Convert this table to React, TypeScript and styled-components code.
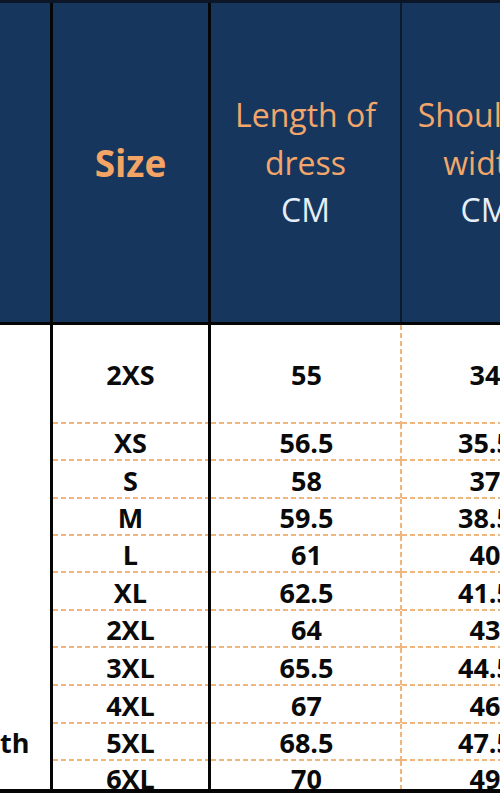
import React from 'react'
import styled, { createGlobalStyle } from 'styled-components'

const GlobalStyle = createGlobalStyle`
  *, *::before, *::after { box-sizing: border-box; }
  html, body {
    margin: 0;
    padding: 0;
    background: #fff;
    overflow: hidden;
  }
  body {
    font-family: 'Open Sans', 'Noto Sans', sans-serif;
  }
`

const COLS = '53px 158px 191px 166px'
const DASH = '#f1b57e'

const Sheet = styled.div`
  width: 568px;
  border-top: 3px solid #0b1729;
`

const HeaderRow = styled.div`
  display: grid;
  grid-template-columns: ${COLS};
  height: 322px;
  background: #17365d;
  border-bottom: 3px solid #050505;
`

const HeadCell = styled.div<{ edge?: 'solid' | 'thin' }>`
  display: flex;
  flex-direction: column;
  align-items: center;
  justify-content: center;
  text-align: center;
  white-space: nowrap;
  font-size: 32px;
  line-height: 47.5px;
  color: #f2a66b;
  border-right: ${p =>
    p.edge === 'solid' ? '3px solid #050608' : p.edge === 'thin' ? '2px solid #0c1a2e' : 'none'};
`

const SizeTitle = styled.span`
  font-size: 37px;
  font-weight: 700;
  color: #f4a565;
`

const Unit = styled.span`
  color: #e6eef8;
`

const Body = styled.div`
  border-bottom: 4px solid #050505;
`

const Row = styled.div<{ h: number }>`
  display: grid;
  grid-template-columns: ${COLS};
  grid-template-rows: ${p => p.h}px;
  height: ${p => p.h}px;
`

const dashedBottom = `
  repeating-linear-gradient(90deg, ${DASH} 0 5px, transparent 5px 8px) left bottom / 100% 2px no-repeat
`
const dashedRight = `
  repeating-linear-gradient(180deg, ${DASH} 0 5px, transparent 5px 8px) right top / 2px 100% no-repeat
`

const Cell = styled.div<{ kind: 'lead' | 'size' | 'mid' | 'end'; last?: boolean }>`
  display: flex;
  align-items: center;
  justify-content: ${p => (p.kind === 'lead' ? 'flex-start' : 'center')};
  min-height: 0;
  padding-top: ${p => (p.last ? 6 : 0)}px;
  font-size: 27px;
  font-weight: 700;
  line-height: 1;
  color: #0a0a0a;
  white-space: nowrap;
  border-right: ${p => (p.kind === 'lead' || p.kind === 'size' ? '3px solid #050505' : 'none')};
  background: ${p => {
    if (p.kind === 'lead') return 'none'
    const layers: string[] = []
    if (!p.last) layers.push(dashedBottom)
    if (p.kind === 'mid') layers.push(dashedRight)
    return layers.length ? layers.join(',') : 'none'
  }};
`

interface SizeRow {
  size: string
  length: string
  shoulder: string
  h: number
  lead?: string
}

const rows: SizeRow[] = [
  { size: '2XS', length: '55', shoulder: '34', h: 99 },
  { size: 'XS', length: '56.5', shoulder: '35.5', h: 37 },
  { size: 'S', length: '58', shoulder: '37', h: 38 },
  { size: 'M', length: '59.5', shoulder: '38.5', h: 37 },
  { size: 'L', length: '61', shoulder: '40', h: 37 },
  { size: 'XL', length: '62.5', shoulder: '41.5', h: 38 },
  { size: '2XL', length: '64', shoulder: '43', h: 37 },
  { size: '3XL', length: '65.5', shoulder: '44.5', h: 38 },
  { size: '4XL', length: '67', shoulder: '46', h: 38 },
  { size: '5XL', length: '68.5', shoulder: '47.5', h: 37, lead: 'th' },
  { size: '6XL', length: '70', shoulder: '49', h: 28 },
]

const App: React.FC = () => {
  return (
    <>
      <GlobalStyle />
      <Sheet>
        <HeaderRow>
          <HeadCell edge="solid" />
          <HeadCell edge="solid">
            <SizeTitle>Size</SizeTitle>
          </HeadCell>
          <HeadCell edge="thin">
            <span>Length of</span>
            <span>dress</span>
            <Unit>CM</Unit>
          </HeadCell>
          <HeadCell>
            <span>Shoulder</span>
            <span>width</span>
            <Unit>CM</Unit>
          </HeadCell>
        </HeaderRow>
        <Body>
          {rows.map((r, i) => {
            const last = i === rows.length - 1
            return (
              <Row key={r.size} h={r.h}>
                <Cell kind="lead" last={last}>{r.lead}</Cell>
                <Cell kind="size" last={last}>{r.size}</Cell>
                <Cell kind="mid" last={last}>{r.length}</Cell>
                <Cell kind="end" last={last}>{r.shoulder}</Cell>
              </Row>
            )
          })}
        </Body>
      </Sheet>
    </>
  )
}

export default App
